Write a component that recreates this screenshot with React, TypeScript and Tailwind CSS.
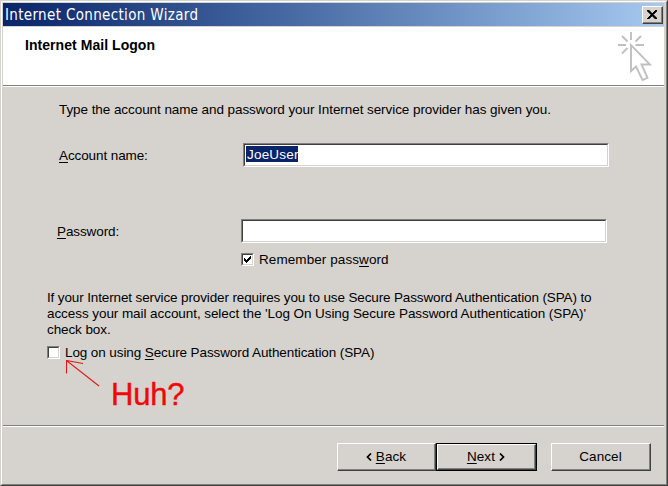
import type { ReactNode } from "react";

function Field({ value }: { value?: string }) {
  return (
    <div className="h-6 w-[366px] shrink-0 border border-t-[#808080] border-l-[#808080] border-r-white border-b-white">
      <div className="flex h-full items-start border border-t-[#404040] border-l-[#404040] border-r-[#d6d3ce] border-b-[#d6d3ce] bg-white pl-px pt-px">
        {value && (
          <span className="block h-4 w-[52px] bg-[#0a246a] pl-px leading-[17px] tracking-[0.2px] text-white">{value}</span>
        )}
      </div>
    </div>
  );
}

function Check({ checked }: { checked?: boolean }) {
  return (
    <div className="size-[13px] shrink-0 border border-t-[#808080] border-l-[#808080] border-r-white border-b-white">
      <div className="size-full border border-t-[#404040] border-l-[#404040] border-r-[#d6d3ce] border-b-[#d6d3ce] bg-white">
        {checked && (
          <svg width="9" height="9" viewBox="0 0 9 9" shapeRendering="crispEdges">
            <path d="M1 3h1v3h-1zM2 4h1v3h-1zM3 5h1v3h-1zM4 4h1v3h-1zM5 3h1v3h-1zM6 2h1v3h-1zM7 1h1v3h-1z" />
          </svg>
        )}
      </div>
    </div>
  );
}

function Button({ children, primary, className }: { children: ReactNode; primary?: boolean; className: string }) {
  return (
    <button className={`block h-7 ${primary ? "border border-black" : ""} ${className}`}>
      <span className="block h-full border border-t-white border-l-white border-r-[#404040] border-b-[#404040]">
        <span className="flex h-full items-center justify-center gap-1 border-r border-b border-[#808080] pt-px">
          {children}
        </span>
      </span>
    </button>
  );
}

function Chevron({ d }: { d: string }) {
  return (
    <svg width="6" height="8" viewBox="0 0 6 8" fill="none" stroke="black" strokeWidth="1.7">
      <path d={d} />
    </svg>
  );
}

function U({ children }: { children: ReactNode }) {
  return <span className="underline decoration-1 underline-offset-2">{children}</span>;
}

export default function App() {
  return (
    <div className="h-[486px] w-[668px] overflow-hidden border border-t-[#d6d3ce] border-l-[#d6d3ce] border-r-[#404040] border-b-[#404040] bg-[#d6d3ce] font-['Liberation_Sans',Arial,sans-serif] text-[13.5px] leading-4 tracking-[-0.1px] text-black">
      <div className="flex h-full flex-col border border-t-white border-l-white border-r-[#808080] border-b-[#808080] pt-px pl-px pr-[2px] whitespace-nowrap">
        <div className="flex h-[23px] shrink-0 items-center justify-between bg-linear-to-r from-[#0a246a] to-[#a6caf0] pl-[2px] pr-[1px]">
          <span className="pt-px font-['DejaVu_Sans_Condensed','DejaVu_Sans',sans-serif] text-[15px] tracking-[0.34px] text-white">
            Internet Connection Wizard
          </span>
          <div className="h-[18px] w-[21px] border border-t-white border-l-white border-r-[#404040] border-b-[#404040] bg-[#d6d3ce]">
            <div className="flex size-full items-center justify-center border-r border-b border-[#808080]">
              <svg width="10" height="9" viewBox="0 0 10 9" shapeRendering="crispEdges">
                <path d="M0 0h2v1h1v1h1v1h2v-1h1v-1h1v-1h2v1h-1v1h-1v1h-1v1h-1v1h1v1h1v1h1v1h1v1h-2v-1h-1v-1h-1v-1h-2v1h-1v1h-1v1h-2v-1h1v-1h1v-1h1v-1h1v-1h-1v-1h-1v-1h-1v-1h-1z" stroke="black" strokeWidth="0.6" />
              </svg>
            </div>
          </div>
        </div>

        <div className="mt-px flex h-[59px] shrink-0 justify-between border-b border-[#808080] bg-white pl-[22px] pr-[12px]">
          <h1 className="pt-[10px] text-[14px] leading-4 font-bold tracking-[0.05px]">Internet Mail Logon</h1>
          <svg className="mt-[4px]" width="36" height="52" viewBox="0 0 36 52" fill="none" stroke="#c0c0c0" strokeWidth="1.9">
            <path d="M15 1v8M2 14h8M19.5 14h8.500M6 5l5.500 5.500M25 5l-5.500 5.500M6 22.500l5.500-5.500" />
            <path d="M15 14v26l5-4.500 6.500 13.500 5-2.200-6-13.300h8.500z" />
          </svg>
        </div>
        <div className="h-px shrink-0 bg-white" />

        <div className="flex h-[338px] shrink-0 flex-col">
          <p className="mt-[15px] ml-14 tracking-[-0.07px]">Type the account name and password your Internet service provider has given you.</p>
          <label className="mt-[25px] ml-14 flex h-6 items-center">
            <span className="w-[184px] pt-[2px]"><U>A</U>ccount name:</span>
            <Field value="JoeUser" />
          </label>
          <label className="mt-[52px] ml-[54px] flex h-6 items-center">
            <span className="w-[184px] pt-[2px]"><U>P</U>assword:</span>
            <Field />
          </label>
          <label className="mt-[7px] ml-[238px] flex h-[18px] items-center gap-[5px]">
            <Check checked />
            <span className="pt-[2px] tracking-[0.08px]">Remember pass<U>w</U>ord</span>
          </label>
          <div className="mt-[22px] ml-11">
            <p className="tracking-[-0.13px]">If your Internet service provider requires you to use Secure Password Authentication (SPA) to</p>
            <p className="tracking-[-0.07px]">access your mail account, select the 'Log On Using Secure Password Authentication (SPA)'</p>
            <p>check box.</p>
          </div>
          <label className="mt-[5px] ml-11 flex h-[18px] items-center gap-[5px]">
            <Check />
            <span className="pt-[2px]">Log on using <U>S</U>ecure Password Authentication (SPA)</span>
          </label>
          <div className="-mt-px ml-[61px] flex items-start text-[#f00808]">
            <svg width="42" height="30" viewBox="0 0 42 30" fill="none" stroke="#e01818" strokeWidth="1.1">
              <path d="M2.500 13.500V0.500L35 26M2.500 0.500L19 3.500" />
            </svg>
            <span className="mt-[19px] ml-[5px] text-[31px] leading-8 tracking-[-0.2px] [-webkit-text-stroke:0.4px_#f00808]">Huh?</span>
          </div>
        </div>

        <div className="h-[2px] shrink-0 border-t border-[#808080] bg-white" />
        <div className="mt-4 mr-[13px] flex justify-end tracking-[0.1px]">
          <Button className="w-[99px]"><Chevron d="M5 .5L1.500 4 5 7.500" /><span><U>B</U>ack</span></Button>
          <Button primary className="w-[101px]"><span><U>N</U>ext</span><Chevron d="M1 .5L4.500 4 1 7.500" /></Button>
          <Button className="ml-[14px] w-[100px]">Cancel</Button>
        </div>
      </div>
    </div>
  );
}
